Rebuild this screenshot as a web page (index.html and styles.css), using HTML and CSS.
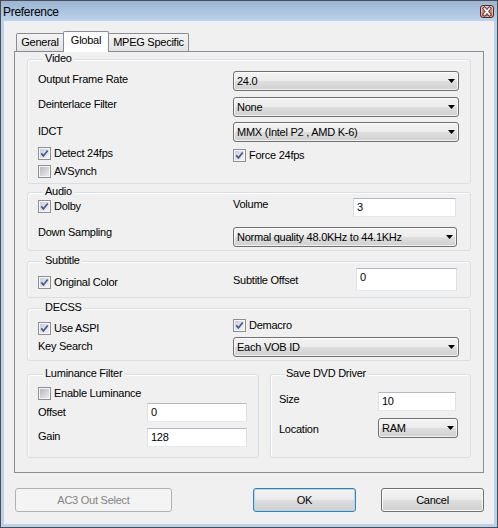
FILE: index.html
```html
<!DOCTYPE html>
<html>
<head>
<meta charset="utf-8">
<title>Preference</title>
<link rel="stylesheet" href="styles.css">
</head>
<body>
<div class="window">
  <div class="titlebar">
    <span class="title">Preference</span>
    <span class="close">
      <svg width="12" height="11" viewBox="0 0 12 11">
        <path d="M3.5 2.5L8.5 8.5M8.5 2.5L3.5 8.5" stroke="#5a2a2a" stroke-width="3.4" stroke-linecap="square"/>
        <path d="M3.5 2.5L8.5 8.5M8.5 2.5L3.5 8.5" stroke="#ffffff" stroke-width="1.8" stroke-linecap="square"/>
      </svg>
    </span>
  </div>
  <div class="client">
    <div class="tabs">
      <div class="tab">General</div>
      <div class="tab active">Global</div>
      <div class="tab">MPEG Specific</div>
    </div>
    <div class="panel">
      <div class="group g-video">
        <div class="legend">Video</div>
        <div class="row h26">
          <div class="lbl c1 mt2">Output Frame Rate</div>
          <div class="combo w226"><span class="val">24.0</span><svg class="arrow" width="7" height="4" viewBox="0 0 7 4"><path d="M0 0H7L3.5 4Z"/></svg></div>
        </div>
        <div class="row h25">
          <div class="lbl c1 mt1">Deinterlace Filter</div>
          <div class="combo w226"><span class="val">None</span><svg class="arrow" width="7" height="4" viewBox="0 0 7 4"><path d="M0 0H7L3.5 4Z"/></svg></div>
        </div>
        <div class="row h25">
          <div class="lbl c1 mt3">IDCT</div>
          <div class="combo w226"><span class="val">MMX (Intel P2 , AMD K-6)</span><svg class="arrow" width="7" height="4" viewBox="0 0 7 4"><path d="M0 0H7L3.5 4Z"/></svg></div>
        </div>
        <div class="row h18">
          <div class="c1">
            <label class="check"><span class="cb on"><svg width="11" height="11" viewBox="0 0 11 11"><path d="M2.3 5.4L4.4 8L8.7 2.4" fill="none" stroke="#3f5897" stroke-width="1.7"/></svg></span><span>Detect 24fps</span></label>
          </div>
          <label class="check mt2"><span class="cb on"><svg width="11" height="11" viewBox="0 0 11 11"><path d="M2.3 5.4L4.4 8L8.7 2.4" fill="none" stroke="#3f5897" stroke-width="1.7"/></svg></span><span>Force 24fps</span></label>
        </div>
        <div class="row">
          <label class="check"><span class="cb"></span><span>AVSynch</span></label>
        </div>
      </div>

      <div class="group g-audio">
        <div class="legend">Audio</div>
        <div class="row h29">
          <div class="c1">
            <label class="check mt2"><span class="cb on"><svg width="11" height="11" viewBox="0 0 11 11"><path d="M2.3 5.4L4.4 8L8.7 2.4" fill="none" stroke="#3f5897" stroke-width="1.7"/></svg></span><span>Dolby</span></label>
          </div>
          <div class="lbl w120">Volume</div>
          <div class="edit w103 h19">3</div>
        </div>
        <div class="row">
          <div class="lbl c1 mtn1">Down Sampling</div>
          <div class="combo w224"><span class="val">Normal quality 48.0KHz to 44.1KHz</span><svg class="arrow" width="7" height="4" viewBox="0 0 7 4"><path d="M0 0H7L3.5 4Z"/></svg></div>
        </div>
      </div>

      <div class="group g-sub">
        <div class="legend">Subtitle</div>
        <div class="row">
          <div class="c1">
            <label class="check mt8"><span class="cb on"><svg width="11" height="11" viewBox="0 0 11 11"><path d="M2.3 5.4L4.4 8L8.7 2.4" fill="none" stroke="#3f5897" stroke-width="1.7"/></svg></span><span>Original Color</span></label>
          </div>
          <div class="lbl w123 mt6">Subtitle Offset</div>
          <div class="edit w101 h23">0</div>
        </div>
      </div>

      <div class="group g-decss">
        <div class="legend">DECSS</div>
        <div class="row h18">
          <div class="c1">
            <label class="check mt3"><span class="cb on"><svg width="11" height="11" viewBox="0 0 11 11"><path d="M2.3 5.4L4.4 8L8.7 2.4" fill="none" stroke="#3f5897" stroke-width="1.7"/></svg></span><span>Use ASPI</span></label>
          </div>
          <label class="check"><span class="cb on"><svg width="11" height="11" viewBox="0 0 11 11"><path d="M2.3 5.4L4.4 8L8.7 2.4" fill="none" stroke="#3f5897" stroke-width="1.7"/></svg></span><span>Demacro</span></label>
        </div>
        <div class="row">
          <div class="lbl c1 mt3">Key Search</div>
          <div class="combo w226"><span class="val">Each VOB ID</span><svg class="arrow" width="7" height="4" viewBox="0 0 7 4"><path d="M0 0H7L3.5 4Z"/></svg></div>
        </div>
      </div>

      <div class="bottom">
        <div class="group g-lum">
          <div class="legend">Luminance Filter</div>
          <div class="row h16">
            <label class="check"><span class="cb"></span><span>Enable Luminance</span></label>
          </div>
          <div class="row h25">
            <div class="lbl w109 mt3">Offset</div>
            <div class="edit w100 h19">0</div>
          </div>
          <div class="row">
            <div class="lbl w109 mt2">Gain</div>
            <div class="edit w100 h19">128</div>
          </div>
        </div>
        <div class="group g-save">
          <div class="legend">Save DVD Driver</div>
          <div class="row h26">
            <div class="lbl w99 mt1">Size</div>
            <div class="edit w78 h19">10</div>
          </div>
          <div class="row">
            <div class="lbl w99 mt5">Location</div>
            <div class="combo w80"><span class="val">RAM</span><svg class="arrow" width="7" height="4" viewBox="0 0 7 4"><path d="M0 0H7L3.5 4Z"/></svg></div>
          </div>
        </div>
      </div>
    </div>

    <div class="buttons">
      <div class="btn disabled w157">AC3 Out Select</div>
      <div class="btn default w103 ok">OK</div>
      <div class="btn w103 cancel">Cancel</div>
    </div>
  </div>
  <div class="watermark">SOFTPEDIA<span class="tm">™</span></div>
  <div class="watermark-url">www.softpedia.com</div>
</div>
</body>
</html>
```

FILE: styles.css
```css
html, body {
  margin: 0;
  padding: 0;
}
body {
  font-family: "Liberation Sans", Arial, sans-serif;
  font-size: 11px;
  letter-spacing: -0.25px;
  color: #000;
  background: #f0f0f0;
}

.window {
  position: relative;
  width: 498px;
  height: 528px;
  box-sizing: border-box;
  border: 1px solid #4a4f57;
  background: #bcd2ea;
  display: flex;
  flex-direction: column;
  overflow: hidden;
}

.titlebar {
  height: 20px;
  flex: none;
  display: flex;
  align-items: center;
  justify-content: space-between;
  padding: 0 3px 0 2px;
  background: linear-gradient(to bottom, #9cb5d2 0%, #aac3de 50%, #bcd3ea 100%);
}
.title {
  font-size: 12px;
  letter-spacing: -0.3px;
  line-height: 14px;
  padding-top: 1px;
  color: #000;
}
.close {
  width: 14px;
  height: 13px;
  box-sizing: border-box;
  border: 1px solid #4b2b30;
  border-radius: 3px;
  background: linear-gradient(to bottom, #e9b0a4 0%, #d8806f 50%, #c4553f 100%);
  box-shadow: inset 0 0 0 1px rgba(255, 220, 210, 0.6);
  display: flex;
  align-items: center;
  justify-content: center;
}
.close svg {
  display: block;
}

.client {
  flex: 1;
  margin: 0 3px 3px 3px;
  background: #f0f0f0;
  padding: 10px 10px 0 10px;
  display: flex;
  flex-direction: column;
}

/* Tabs */
.tabs {
  display: flex;
  align-items: flex-end;
  height: 20px;
  margin-left: 2px;
}
.tab {
  box-sizing: border-box;
  height: 18px;
  border: 1px solid #898c95;
  border-bottom: none;
  padding-top: 2px;
  line-height: 13px;
  text-align: center;
  background: linear-gradient(to bottom, #f4f4f4 0%, #ececec 50%, #e2e2e2 100%);
  border-radius: 2px 2px 0 0;
}
.tab:nth-child(1) { width: 48px; }
.tab:nth-child(2) { width: 46px; margin-left: -1px; }
.tab:nth-child(3) { width: 81px; margin-left: -1px; }
.tab.active {
  position: relative;
  z-index: 2;
  height: 21px;
  margin-bottom: -1px;
  background: #ffffff;
}

.panel {
  position: relative;
  z-index: 1;
  border: 1px solid #898c95;
  padding: 7px 12px 14px 12px;
  background: #f0f0f0;
}

/* Group boxes */
.group {
  --pt: 0px;
  box-sizing: border-box;
  border: 1px solid #d5dfe5;
  border-radius: 3px;
  box-shadow: inset 1px 1px 0 #ffffff;
  padding-left: 10px;
}
.legend {
  width: max-content;
  height: 13px;
  line-height: 13px;
  margin: -8px 0 0 5px;
  margin-bottom: calc(var(--pt) - 5px);
  padding: 0 2px;
  background: #f0f0f0;
}
.g-video { height: 125px; --pt: 11px; }
.g-audio { height: 59px; margin-top: 8px; --pt: 5px; }
.g-sub { height: 37px; margin-top: 10px; --pt: 6px; }
.g-decss { height: 53px; margin-top: 10px; --pt: 10px; }

.bottom {
  display: flex;
  gap: 11px;
  margin-top: 13px;
}
.g-lum { width: 232px; height: 84px; --pt: 12px; }
.g-save { width: 201px; height: 84px; --pt: 17px; padding-left: 8px; }

/* Rows */
.row {
  display: flex;
  align-items: flex-start;
}
.h16 { height: 16px; }
.h18 { height: 18px; }
.h25 { height: 25px; }
.h26 { height: 26px; }
.h29 { height: 29px; }

.c1 { width: 195px; flex: none; }
.w99 { width: 99px; flex: none; }
.w109 { width: 109px; flex: none; }
.w120 { width: 120px; flex: none; }
.w123 { width: 123px; flex: none; }

.lbl {
  line-height: 13px;
  white-space: nowrap;
}
.mt1 { margin-top: 1px; }
.mt2 { margin-top: 2px; }
.mt3 { margin-top: 3px; }
.mt5 { margin-top: 5px; }
.mt6 { margin-top: 6px; }
.mt8 { margin-top: 8px; }
.mtn1 { margin-top: -1px; }

/* Checkbox */
.check {
  display: flex;
  align-items: center;
  gap: 3px;
  height: 13px;
  line-height: 13px;
  white-space: nowrap;
}
.cb {
  width: 13px;
  height: 13px;
  box-sizing: border-box;
  flex: none;
  border: 1px solid #8e8f8f;
  background: linear-gradient(135deg, #aeb2b8 0%, #d4d6d9 55%, #f2f2f2 100%);
  box-shadow: inset 0 0 0 1px #f6f6f6;
}
.cb.on {
  background: linear-gradient(135deg, #c4c8ce 0%, #e2e4e7 55%, #f6f6f6 100%);
}
.cb svg {
  display: block;
}

/* Combobox */
.combo {
  box-sizing: border-box;
  height: 20px;
  flex: none;
  border: 1px solid #707070;
  border-radius: 3px;
  padding: 0 3px 0 3px;
  display: flex;
  align-items: center;
  background: linear-gradient(to bottom, #f3f3f3 0%, #ececec 48%, #dedede 52%, #d0d0d0 100%);
  box-shadow: inset 0 0 0 1px rgba(255, 255, 255, 0.7);
}
.combo .val {
  flex: 1;
  line-height: 18px;
  white-space: nowrap;
}
.combo .arrow {
  flex: none;
  display: block;
  fill: #000;
}
.w80 { width: 80px; }
.w224 { width: 224px; }
.w226 { width: 226px; }

/* Edit */
.edit {
  box-sizing: border-box;
  flex: none;
  background: #ffffff;
  border: 1px solid #dbdfe6;
  border-top-color: #b5b8c0;
  border-bottom-color: #e3e9ef;
  padding: 2px 3px 0 3px;
  line-height: 13px;
}
.w78 { width: 78px; }
.w100 { width: 100px; }
.w101 { width: 101px; }
.w103 { width: 103px; }
.h19 { height: 19px; }
.h23 { height: 23px; }

/* Buttons */
.buttons {
  display: flex;
  margin-top: 15px;
  padding-left: 1px;
}
.btn {
  box-sizing: border-box;
  height: 24px;
  border: 1px solid #707070;
  border-radius: 3px;
  line-height: 22px;
  text-align: center;
  background: linear-gradient(to bottom, #f3f3f3 0%, #ebebeb 48%, #dddddd 52%, #cfcfcf 100%);
  box-shadow: inset 0 0 0 1px rgba(255, 255, 255, 0.8);
}
.w157 { width: 157px; }
.btn.disabled {
  border-color: #adb2b5;
  background: #f4f4f4;
  color: #838383;
  box-shadow: none;
}
.btn.default {
  border-color: #3c7fb1;
  box-shadow: inset 0 0 0 1px #a8dcf6;
}
.ok { margin-left: auto; }
.cancel { margin-left: 25px; }

/* Watermark overlay */
.watermark {
  position: absolute;
  left: 272px;
  top: 92px;
  font-family: "Liberation Serif", "Times New Roman", serif;
  font-size: 24px;
  line-height: 24px;
  letter-spacing: -0.8px;
  color: rgba(255, 255, 255, 0.6);
  text-shadow: 0 0 1px rgba(90, 90, 90, 0.55);
  pointer-events: none;
}
.watermark .tm {
  font-size: 8px;
  vertical-align: top;
  letter-spacing: 0;
}
.watermark-url {
  position: absolute;
  left: 298px;
  top: 122px;
  font-family: "Liberation Sans", Arial, sans-serif;
  font-size: 9px;
  line-height: 11px;
  letter-spacing: 0;
  color: rgba(255, 255, 255, 0.55);
  text-shadow: 0 0 1px rgba(90, 90, 90, 0.5);
  pointer-events: none;
}
```
